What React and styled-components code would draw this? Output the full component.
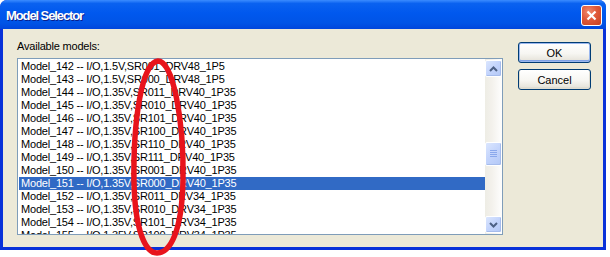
import React from "react";
import styled, { createGlobalStyle } from "styled-components";

const Global = createGlobalStyle`
  html, body { margin: 0; padding: 0; background: #fff; }
  body { font-family: "Liberation Sans", Arial, sans-serif; }
`;

const Page = styled.div`
  position: relative;
  width: 610px;
  height: 257px;
  overflow: hidden;
`;

const Window = styled.div`
  width: 606px;
  height: 250px;
  display: flex;
  flex-direction: column;
  border-radius: 7px 7px 0 0;
  background: #0831d9;
  overflow: hidden;
`;

const TitleBar = styled.div`
  height: 29px;
  flex: none;
  display: flex;
  align-items: center;
  justify-content: space-between;
  padding: 0 4px 0 6px;
  box-sizing: border-box;
  background: linear-gradient(180deg, #3b8cff 0%, #0a62f0 12%, #0058ee 45%, #0054e6 80%, #0046dc 100%);
`;

const Title = styled.div`
  color: #fff;
  font-weight: bold;
  font-size: 13px;
  letter-spacing: -1.1px;
  text-shadow: 1px 1px 0 #0a1e8c;
  padding-top: 2px;
`;

const CloseBtn = styled.div`
  width: 21px;
  height: 21px;
  box-sizing: border-box;
  border: 1px solid #fff;
  border-radius: 3px;
  background: radial-gradient(circle at 35% 30%, #f08a6e 0%, #e0593a 45%, #c7401f 100%);
  display: flex;
  align-items: center;
  justify-content: center;
  margin-top: 2px;
`;

const Body = styled.div`
  flex: 1;
  margin: 0 3px 3px 3px;
  background: #ece9d8;
  display: flex;
  padding: 11px 0 0 14px;
  box-sizing: border-box;
`;

const LeftCol = styled.div`
  display: flex;
  flex-direction: column;
`;

const Label = styled.div`
  font-size: 11px;
  letter-spacing: -0.2px;
  line-height: 13px;
  height: 13px;
  color: #000;
  margin-bottom: 5px;
`;

const ListBox = styled.div`
  width: 486px;
  height: 177px;
  box-sizing: border-box;
  border: 1px solid #7f9db9;
  background: #fff;
  display: flex;
  padding-left: 1px;
`;

const Rows = styled.div`
  flex: 1;
  overflow: hidden;
  padding-top: 1px;
`;

const Row = styled.div`
  height: 13px;
  line-height: 13px;
  font-size: 11px;
  letter-spacing: -0.2px;
  padding-left: 2px;
  white-space: nowrap;
  color: ${p => (p.$selected ? "#fff" : "#000")};
  background: ${p => (p.$selected ? "#316ac5" : "transparent")};
`;

const ScrollBar = styled.div`
  width: 17px;
  flex: none;
  display: flex;
  flex-direction: column;
  padding: 1px 0;
  box-sizing: border-box;
  background: linear-gradient(90deg, #eeede5 0%, #f3f1ec 40%, #fefefe 100%);
`;

const ScrollBtn = styled.div`
  width: 17px;
  height: 17px;
  box-sizing: border-box;
  border: 1px solid #fff;
  border-radius: 2px;
  background: linear-gradient(135deg, #dbe6fe 0%, #c3d4fc 50%, #b3c8f6 100%);
  box-shadow: inset -1px -1px 0 #a6bcec;
  display: flex;
  align-items: center;
  justify-content: center;
  flex: none;
`;

const Track = styled.div`
  flex: 1;
  display: flex;
  flex-direction: column;
  padding-top: ${p => p.$offset}px;
`;

const Thumb = styled(ScrollBtn)`
  height: 24px;
`;

const RightCol = styled.div`
  display: flex;
  flex-direction: column;
  gap: 6px;
  margin: 2px 0 0 15px;
`;

const Button = styled.div`
  width: 73px;
  height: 21px;
  box-sizing: border-box;
  border: 1px solid #003c74;
  border-radius: 3px;
  background: linear-gradient(180deg, #ffffff 0%, #f7f6f2 55%, #e3e0d6 100%);
  box-shadow: ${p =>
    p.$default
      ? "inset 0 0 0 1px #9ab7ee, inset 0 -1px 0 1px #7fa2e6"
      : "inset 0 -1px 0 1px #e0ddd2"};
  display: flex;
  align-items: center;
  justify-content: center;
  font-size: 11px;
  color: #000;
`;

const Annotation = styled.svg`
  position: absolute;
  left: 0;
  top: 0;
  pointer-events: none;
`;

const models = [
  "Model_142 -- I/O,1.5V,SR001_DRV48_1P5",
  "Model_143 -- I/O,1.5V,SR000_DRV48_1P5",
  "Model_144 -- I/O,1.35V,SR011_DRV40_1P35",
  "Model_145 -- I/O,1.35V,SR010_DRV40_1P35",
  "Model_146 -- I/O,1.35V,SR101_DRV40_1P35",
  "Model_147 -- I/O,1.35V,SR100_DRV40_1P35",
  "Model_148 -- I/O,1.35V,SR110_DRV40_1P35",
  "Model_149 -- I/O,1.35V,SR111_DRV40_1P35",
  "Model_150 -- I/O,1.35V,SR001_DRV40_1P35",
  "Model_151 -- I/O,1.35V,SR000_DRV40_1P35",
  "Model_152 -- I/O,1.35V,SR011_DRV34_1P35",
  "Model_153 -- I/O,1.35V,SR010_DRV34_1P35",
  "Model_154 -- I/O,1.35V,SR101_DRV34_1P35",
  "Model_155 -- I/O,1.35V,SR100_DRV34_1P35",
];

const Chevron = ({ up }) => (
  <svg width="9" height="6" viewBox="0 0 9 6">
    <path
      d={up ? "M1 5 L4.5 1.5 L8 5" : "M1 1 L4.5 4.5 L8 1"}
      fill="none"
      stroke="#4d6185"
      strokeWidth="2"
    />
  </svg>
);

const Grip = () => (
  <svg width="7" height="8" viewBox="0 0 7 8">
    {[0.5, 2.5, 4.5, 6.5].map(y => (
      <line key={y} x1="0" x2="7" y1={y} y2={y} stroke="#8aa8ec" strokeWidth="1" />
    ))}
  </svg>
);

export default function App() {
  return (
    <Page>
      <Global />
      <Window>
        <TitleBar>
          <Title>Model Selector</Title>
          <CloseBtn>
            <svg width="11" height="11" viewBox="0 0 11 11">
              <path d="M1.5 1.5 L9.5 9.5 M9.5 1.5 L1.5 9.5" stroke="#fff" strokeWidth="2.2" />
            </svg>
          </CloseBtn>
        </TitleBar>
        <Body>
          <LeftCol>
            <Label>Available models:</Label>
            <ListBox>
              <Rows>
                {models.map(m => (
                  <Row key={m} $selected={m.startsWith("Model_151")}>
                    {m}
                  </Row>
                ))}
              </Rows>
              <ScrollBar>
                <ScrollBtn>
                  <Chevron up />
                </ScrollBtn>
                <Track $offset={65}>
                  <Thumb>
                    <Grip />
                  </Thumb>
                </Track>
                <ScrollBtn>
                  <Chevron />
                </ScrollBtn>
              </ScrollBar>
            </ListBox>
          </LeftCol>
          <RightCol>
            <Button $default>OK</Button>
            <Button>Cancel</Button>
          </RightCol>
        </Body>
      </Window>
      <Annotation width="610" height="257">
        <path
          d="M158 61 C142 62 133 120 134 182 C135 232 146 253 157 253 C170 253 182 232 183 180 C184 120 173 61 158 61 Z"
          fill="none"
          stroke="#e8141c"
          strokeWidth="5.5"
        />
      </Annotation>
    </Page>
  );
}
